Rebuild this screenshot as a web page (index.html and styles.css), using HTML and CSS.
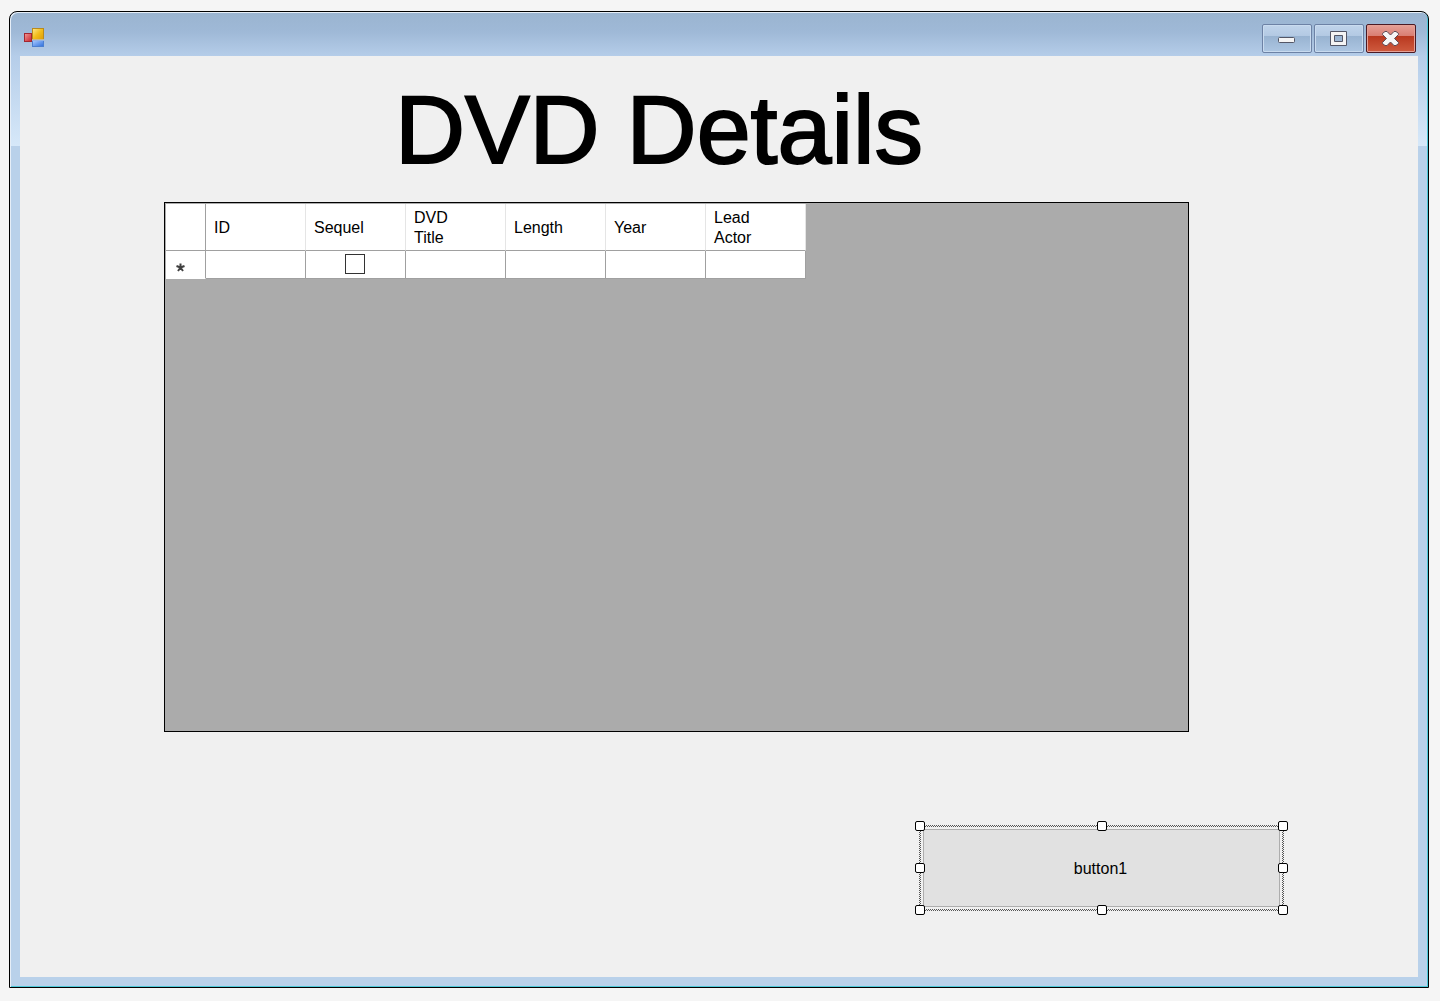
FILE: index.html
```html
<!DOCTYPE html>
<html lang="en">
<head>
<meta charset="utf-8">
<title>DVD Details</title>
<link rel="stylesheet" href="styles.css">
</head>
<body>
<main class="window">
  <header class="titlebar">
    <svg class="app-icon" viewBox="0 0 20 20" aria-hidden="true">
      <defs>
        <linearGradient id="gold" x2="1" y2="1"><stop offset="0" stop-color="#ffe98a"/><stop offset=".5" stop-color="#f2bd1c"/><stop offset="1" stop-color="#dc9c08"/></linearGradient>
        <linearGradient id="red" x2="1" y2="1"><stop offset="0" stop-color="#f39a94"/><stop offset="1" stop-color="#c8202c"/></linearGradient>
        <linearGradient id="blue" x2="1" y2="1"><stop offset="0" stop-color="#a9cbff"/><stop offset="1" stop-color="#2f6fdc"/></linearGradient>
      </defs>
      <rect x=".5" y="5.500" width="7" height="8" fill="url(#red)" stroke="#a32630"/>
      <rect x="8.500" y="12.500" width="11" height="6" fill="url(#blue)" stroke="#4c7fd0"/>
      <rect x="8.500" y=".5" width="11" height="11" fill="url(#gold)" stroke="#b98a1c"/>
      <path d="M8 12h12" stroke="#dfe8f2"/>
    </svg>
    <div class="caption-buttons">
      <button class="caption" type="button" aria-label="Minimize">
        <svg viewBox="0 0 50 29"><rect x="16.500" y="13.500" width="16" height="5" rx="1" fill="#f4f4f4" stroke="#535666"/></svg>
      </button>
      <button class="caption" type="button" aria-label="Maximize">
        <svg viewBox="0 0 50 29"><path fill-rule="evenodd" d="M16.500 7.500h16v14h-16zM20.500 11.500v6h8v-6z" fill="#f4f4f4" stroke="#535666" stroke-linejoin="round"/></svg>
      </button>
      <button class="caption caption-close" type="button" aria-label="Close">
        <svg viewBox="0 0 50 29"><path d="M19 7.500h2l3.500 3.500 3.500-3.500h2l2.500 2v1l-4 4 4 4v1l-2.500 2h-2l-3.500-3.500-3.500 3.500h-2l-2.500-2v-1l4-4-4-4v-1z" fill="#f6f6f6" stroke="#5c4b55" stroke-linejoin="round"/></svg>
      </button>
    </div>
  </header>
  <div class="client">
    <h1 class="heading">DVD Details</h1>
    <div class="grid-view">
      <table class="grid">
        <thead>
          <tr>
            <th class="row-header"></th>
            <th>ID</th>
            <th>Sequel</th>
            <th>DVD<br>Title</th>
            <th>Length</th>
            <th>Year</th>
            <th>Lead<br>Actor</th>
          </tr>
        </thead>
        <tbody>
          <tr>
            <th class="row-header" scope="row"><svg class="new-row" viewBox="0 0 9 9" role="img" aria-label="New row"><path d="M4.500 4.500V.5M4.500 4.500l-4-1.500M4.500 4.500l4-1.500M4.500 4.500L2 8M4.500 4.500L7 8" fill="none" stroke="#404040" stroke-width="2"/></svg></th>
            <td></td>
            <td class="check-cell"><input class="check" type="checkbox" aria-label="Sequel"></td>
            <td></td>
            <td></td>
            <td></td>
            <td></td>
          </tr>
        </tbody>
      </table>
    </div>
    <div class="selection">
      <button class="form-button" type="button">button1</button>
      <span class="edge edge-top"></span>
      <span class="edge edge-bottom"></span>
      <span class="edge edge-left"></span>
      <span class="edge edge-right"></span>
      <div class="handles">
        <i class="handle"></i><i class="handle"></i><i class="handle"></i>
        <i class="handle"></i><i></i><i class="handle"></i>
        <i class="handle"></i><i class="handle"></i><i class="handle"></i>
      </div>
    </div>
  </div>
</main>
</body>
</html>
```
FILE: styles.css
```css
* {
  box-sizing: border-box;
}

body {
  display: flex;
  min-height: 100vh;
  margin: 0;
  padding: 11px 11px 13px 9px;
  background: #f5f5f5;
  color: #000;
  font: 16px/20px "Liberation Sans", Arial, sans-serif;
}

button {
  font: inherit;
  color: inherit;
}

/* Window frame */
.window {
  flex: 1;
  display: flex;
  flex-direction: column;
  padding: 0 10px 10px;
  border: 1px solid #000;
  border-radius: 8px 8px 0 0;
  background: linear-gradient(#9ab4d0 0, #9fb9d7 20px, #b5cde9 44px, #d6e8f9 134px, #b9d1ea 134px);
  box-shadow: inset 1px 1px #e6eef7, inset -1px -1px #4cc8d8;
}

.titlebar {
  display: flex;
  justify-content: space-between;
  align-items: flex-start;
  height: 44px;
  padding: 12px 2px 0 4px;
}

.app-icon {
  width: 20px;
  height: 20px;
  margin-top: 4px;
}

.caption-buttons {
  display: flex;
  gap: 2px;
}

.caption {
  width: 50px;
  height: 29px;
  padding: 0;
  border: 1px solid #6d82a5;
  border-radius: 2px;
  background: linear-gradient(#c0d4eb, #b3c9e3 40%, #98b3d1 41%, #adc6e2);
  box-shadow: inset 0 0 0 1px #c9dbef;
}

.caption svg {
  display: block;
  width: 50px;
  height: 29px;
  margin: -1px;
}

.caption-close {
  border-color: #4b1a24;
  background: linear-gradient(#e6a097, #d97e72 40%, #b8381f 41%, #cf5b3f);
  box-shadow: inset 0 0 0 1px #e5a197;
}

/* Form */
.client {
  flex: 1;
  display: flex;
  flex-direction: column;
  padding: 14px 130px 62px 144px;
  background: #f0f0f0;
}

.heading {
  margin: 0 134px 12px 0;
  font-size: 97px;
  font-weight: 400;
  line-height: 120px;
  text-align: center;
  -webkit-text-stroke: 2px #000;
}

.grid-view {
  flex: 1;
  min-height: 200px;
  margin: 0 99px 89px 0;
  padding: 1px 0 0 1px;
  border: 1px solid #000;
  background: #ababab;
}

.grid {
  width: 640px;
  table-layout: fixed;
  border-spacing: 0;
  background: #fff;
}

.grid th,
.grid td {
  width: 100px;
  height: 28px;
  padding: 0 8px;
  border: solid #a0a0a0;
  border-width: 0 1px 1px 0;
  font-weight: 400;
  text-align: left;
}

.grid thead th {
  height: 47px;
  padding-top: 2px;
  border-right-color: #e5e5e5;
}

.grid .row-header {
  width: 40px;
  padding: 0 10px;
  border-right-color: #a0a0a0;
}

.grid tbody .row-header {
  border-bottom-color: #fff;
}

.new-row {
  display: block;
  width: 9px;
  height: 9px;
  margin-top: 6px;
}

.grid .check-cell {
  padding: 0 2px 2px 0;
}

.check {
  appearance: none;
  display: block;
  width: 20px;
  height: 20px;
  margin: 0 auto;
  border: 1px solid #333;
  background: #fff;
}

/* Selected button with its resize frame */
.selection {
  position: relative;
  align-self: flex-end;
  width: 373px;
  height: 94px;
  padding: 8px;
}

.form-button {
  width: 100%;
  height: 100%;
  padding: 2px 2px 0 0;
  border: 1px solid #adadad;
  background: #e1e1e1;
}

.edge {
  position: absolute;
  background: repeating-conic-gradient(#555 0 25%, #f0f0f0 0 50%) 0 0 / 2px 2px;
}

.edge-top,
.edge-bottom {
  left: 4px;
  right: 4px;
  height: 2px;
}

.edge-left,
.edge-right {
  top: 4px;
  bottom: 4px;
  width: 2px;
}

.edge-top { top: 4px; }
.edge-bottom { bottom: 4px; }
.edge-left { left: 4px; }
.edge-right { right: 4px; }

.handles {
  position: absolute;
  inset: 0;
  display: grid;
  grid-template-columns: repeat(3, 10px);
  grid-template-rows: repeat(3, 10px);
  justify-content: space-between;
  align-content: space-between;
  pointer-events: none;
}

.handle {
  border: 1px solid #000;
  border-radius: 2px;
  background: #fff;
}
```
